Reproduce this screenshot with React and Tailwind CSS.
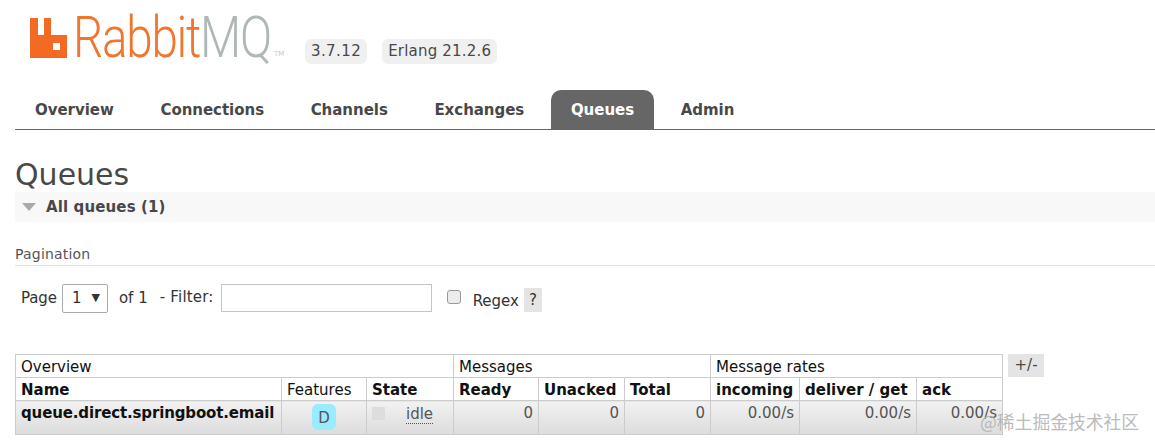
const font = { fontFamily: '"DejaVu Sans", Verdana, sans-serif' };

function Logo() {
  return (
    <div className="relative flex items-start h-[47px] w-[255px]">
      <svg width="37" height="40" viewBox="0 0 37 40" className="shrink-0">
        <path fillRule="evenodd" fill="#f26a24" d="M0 0h8v17h6V0h7v17h16v23H0z M23 25v7h7v-7z" />
      </svg>
      <div className="w-[210px] ml-[6px] -mt-[13px] h-[66px] leading-[66px] whitespace-nowrap font-['Roboto',sans-serif] font-light text-[57px] tracking-[-1.5px] origin-left scale-x-[0.835]">
        <span className="text-[#f0762e]">Rabbit</span>
        <span className="text-[#b0b8b7]">MQ</span>
      </div>
      <span className="absolute left-[244px] top-[33px] text-[7px] text-[#c4c9c8] leading-none">TM</span>
    </div>
  );
}

const tabs = ["Overview", "Connections", "Channels", "Exchanges", "Queues", "Admin"];

const Th = ({ children, bold = true, span, className = "" }) => (
  <th colSpan={span} className={`border border-[#cccccc] h-[23px] px-[5px] pt-[3px] text-left align-middle text-[15px] leading-none text-[#111111] ${bold ? "font-bold" : "font-normal"} ${className}`}>
    {children}
  </th>
);

const Td = ({ children }) => (
  <td className="border border-[#cccccc] bg-gradient-to-b from-[#f2f2f2] to-[#dcdcdc] px-[5px] pt-[3px] align-top text-right text-[15px] leading-[18px] text-[#555555]">
    {children}
  </td>
);

export default function App() {
  return (
    <div style={font} className="relative w-[1155px] h-[446px] overflow-hidden bg-white text-[#484848]">
      <header className="flex items-start pl-[30px] pt-[18px] h-[90px]">
        <Logo />
        <span className="mt-[21px] ml-[20px] h-[25px] px-[6px] rounded-[6px] bg-[#f0f0f0] text-[15px] leading-[25px] tracking-[0.4px] text-[#484848]">3.7.12</span>
        <span className="mt-[21px] ml-[15px] h-[25px] px-[6px] rounded-[6px] bg-[#f0f0f0] text-[15px] leading-[25px] tracking-[0.2px] text-[#484848]">Erlang 21.2.6</span>
      </header>

      <nav className="mx-[15px] h-[40px] flex items-end border-b border-[#666666] w-[1140px]">
        {tabs.map((t) => (
          <a
            key={t}
            className={`h-[39px] px-[20px] mr-[6.6px] rounded-t-[10px] text-[15px] tracking-[-0.03px] font-bold leading-[41px] ${t === "Queues" ? "bg-[#666666] text-white" : "text-[#484848]"}`}
          >
            {t}
          </a>
        ))}
      </nav>

      <h1 className="ml-[15px] mt-[27px] text-[30px] leading-[36px] font-normal text-[#484848]">Queues</h1>

      <div className="ml-[15px] -mt-[1px] flex items-center h-[30px] bg-[#f8f8f8]">
        <span className="ml-[7px] w-0 h-0 border-x-[7px] border-x-transparent border-t-[8px] border-t-[#aaaaaa]" />
        <h2 className="ml-[10px] text-[15px] tracking-[0.12px] font-bold text-[#484848] leading-none">All queues (1)</h2>
      </div>

      <div className="ml-[15px] mt-[24px] h-[20px] border-b border-[#e2e2e2] text-[14px] tracking-[0.2px] leading-[16px] text-[#555555]">Pagination</div>

      <div className="flex items-center ml-[21px] mt-[18px] h-[28px] text-[15px] text-[#333333]">
        <span className="tracking-[-0.1px]">Page</span>
        <span className="ml-[5px] w-[46px] h-[29px] border border-[#aaaaaa] rounded-[2px] flex items-center justify-between pl-[9px] pr-[7px]">
          <span>1</span>
          <span className="text-[11px]">▼</span>
        </span>
        <span className="ml-[11px]">of 1</span>
        <span className="ml-[12px] -mt-[2px] tracking-[0.2px]">- Filter:</span>
        <span className="ml-[7px] w-[211px] h-[28px] border border-[#c4c4c4] block" />
        <span className="ml-[15px] -mt-[3px] w-[14px] h-[14px] rounded-[3px] border border-[#9a9a9a] bg-[#ececec]" />
        <span className="ml-[12px] mt-[7px]">Regex</span>
        <span className="ml-[5px] mt-[4px] w-[18px] h-[24px] bg-[#e4e4e4] text-center leading-[24px]">?</span>
      </div>

      <div className="flex items-start ml-[15px] mt-[42px]">
        <table className="table-fixed border-collapse w-[987px]">
          <colgroup>
            <col className="w-[266px]" /><col className="w-[85px]" /><col className="w-[87px]" /><col className="w-[85px]" />
            <col className="w-[86px]" /><col className="w-[86px]" /><col className="w-[89px]" /><col className="w-[117px]" /><col className="w-[86px]" />
          </colgroup>
          <thead>
            <tr>
              <Th span={3} bold={false}>Overview</Th>
              <Th span={3} bold={false}>Messages</Th>
              <Th span={3} bold={false}>Message rates</Th>
            </tr>
            <tr>
              <Th>Name</Th>
              <Th bold={false}>Features</Th>
              <Th>State</Th>
              <Th>Ready</Th>
              <Th>Unacked</Th>
              <Th>Total</Th>
              <Th>incoming</Th>
              <Th>deliver / get</Th>
              <Th>ack</Th>
            </tr>
          </thead>
          <tbody>
            <tr className="h-[34px]">
              <td className="border border-[#cccccc] bg-gradient-to-b from-[#f2f2f2] to-[#dcdcdc] px-[5px] pt-[3px] align-top text-[15px] tracking-[-0.14px] font-bold leading-[18px] text-[#111111] whitespace-nowrap">queue.direct.springboot.email</td>
              <td className="border border-[#cccccc] bg-gradient-to-b from-[#f2f2f2] to-[#dcdcdc] align-top pt-[3px]">
                <span className="block mx-auto w-[24px] h-[26px] rounded-[6px] bg-[#99ebff] text-center text-[15px] leading-[28px] text-[#555555]">D</span>
              </td>
              <td className="border border-[#cccccc] bg-gradient-to-b from-[#f2f2f2] to-[#dcdcdc] align-top pt-[6px] pl-[5px]">
                <div className="flex items-start">
                  <span className="w-[13px] h-[13px] bg-[#dddddd]" />
                  <span className="ml-[21px] -mt-[2px] text-[15px] leading-[18px] text-[#555555] border-b border-dotted border-[#555555]">idle</span>
                </div>
              </td>
              <Td>0</Td><Td>0</Td><Td>0</Td>
              <Td>0.00/s</Td><Td>0.00/s</Td><Td>0.00/s</Td>
            </tr>
          </tbody>
        </table>
        <span className="ml-[5px] w-[36px] h-[23px] bg-[#e4e4e4] text-center text-[15px] leading-[23px] text-[#484848]">+/-</span>
      </div>

      <div className="absolute left-[980px] top-[410px] text-[17.8px] leading-[22px] text-[#b4b4b4] whitespace-nowrap font-['Noto_Sans_CJK_SC',sans-serif] opacity-90">@稀土掘金技术社区</div>
    </div>
  );
}
